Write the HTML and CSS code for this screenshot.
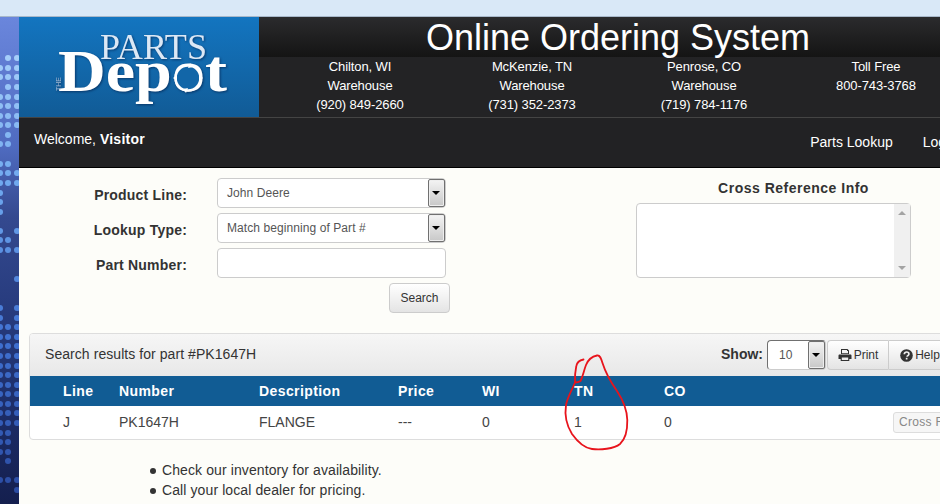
FILE: index.html
```html
<!DOCTYPE html>
<html lang="en">
<head>
<meta charset="utf-8">
<title>Parts Depot - Online Ordering System</title>
<link rel="stylesheet" href="styles.css">
</head>
<body>
<div class="topstrip"></div>
<div class="page">
  <aside class="sidebar">
    <svg class="dots" width="19" height="487" viewBox="0 17 19 487">
      <defs>
        <linearGradient id="dotfill" gradientUnits="userSpaceOnUse" x1="0" y1="50" x2="0" y2="500">
          <stop offset="0" stop-color="#a8d0fa"/>
          <stop offset="0.3" stop-color="#6fa8ee"/>
          <stop offset="0.65" stop-color="#3f70d0"/>
          <stop offset="1" stop-color="#2a4aa0"/>
        </linearGradient>
      </defs>
      <path class="dotpath" stroke="url(#dotfill)" d="M8 58h.01M17 58h.01M0 68h.01M8 68h.01M17 68h.01M0 77h.01M8 77h.01M17 77h.01M8 87h.01M17 87h.01M0 97h.01M8 97h.01M17 97h.01M0 106h.01M8 106h.01M17 106h.01M0 116h.01M8 116h.01M17 116h.01M0 125h.01M8 125h.01M17 125h.01M8 135h.01M0 144h.01M8 144h.01M0 164h.01M8 164h.01M0 173h.01M8 173h.01M17 173h.01M0 183h.01M8 183h.01M17 183h.01M0 193h.01M0 202h.01M0 212h.01M0 231h.01M17 231h.01M0 240h.01M8 240h.01M0 250h.01M8 250h.01M17 250h.01M17 279h.01M0 308h.01M17 308h.01M0 318h.01M17 318h.01M0 327h.01M8 327h.01M17 327h.01M0 337h.01M8 337h.01M17 337h.01M0 346h.01M8 346h.01M17 346h.01M0 356h.01M8 356h.01M17 356h.01M0 366h.01M8 366h.01M17 366h.01M0 375h.01M8 375h.01M17 375h.01M0 385h.01M8 385h.01M17 385h.01M0 394h.01M8 394h.01M17 394h.01M0 404h.01M8 404h.01M17 404h.01M0 413h.01M8 413h.01M17 413h.01M0 423h.01M8 423h.01M17 423h.01M0 433h.01M8 433h.01M0 442h.01M8 442h.01M0 452h.01M8 452h.01M8 461h.01M0 480h.01M8 480h.01M17 480h.01M17 490h.01"/>
    </svg>
  </aside>
  <div class="wrap">
    <header class="header">
      <div class="logo">
        <svg width="240" height="100" viewBox="0 0 240 100" role="img" aria-label="The Parts Depot">
          <text class="logo-parts" x="81" y="42" textLength="107" lengthAdjust="spacingAndGlyphs">PARTS</text>
          <text class="logo-depot" x="39" y="74" textLength="169" lengthAdjust="spacingAndGlyphs">Depot</text>
          <text class="logo-the" transform="translate(42 74) rotate(-90)">THE</text>
          <circle class="logo-ring" cx="169" cy="61" r="12.500"/>
          <path class="logo-notch" d="M154 61l4-3v6zM171 46l3 4-5 1zM184 61l-4 3v-6zM167 76l-3-4 5-1z"/>
        </svg>
      </div>
      <div class="head-right">
        <h1 class="title">Online Ordering System</h1>
        <div class="contacts">
          <p class="contact">Chilton, WI<br>Warehouse<br>(920) 849-2660</p>
          <p class="contact">McKenzie, TN<br>Warehouse<br>(731) 352-2373</p>
          <p class="contact">Penrose, CO<br>Warehouse<br>(719) 784-1176</p>
          <p class="contact">Toll Free<br>800-743-3768</p>
        </div>
      </div>
    </header>
    <nav class="nav">
      <div class="welcome">Welcome, <strong>Visitor</strong></div>
      <div class="navlinks"><a>Parts Lookup</a><a>Login</a></div>
    </nav>
    <main class="main">
      <section class="lookup">
        <form class="form">
          <label class="flabel">Product Line:</label>
          <div class="select"><span>John Deere</span><i class="arrowbtn"><b></b></i></div>
          <label class="flabel">Lookup Type:</label>
          <div class="select"><span>Match beginning of Part #</span><i class="arrowbtn"><b></b></i></div>
          <label class="flabel">Part Number:</label>
          <div class="input"></div>
          <div class="search-cell"><button class="btn search" type="button">Search</button></div>
        </form>
        <div class="xref">
          <h2 class="xref-title">Cross Reference Info</h2>
          <div class="xref-box">
            <div class="xref-scroll"><b class="sc-up"></b><b class="sc-down"></b></div>
          </div>
        </div>
      </section>
      <section class="panel">
        <div class="panel-head">
          <div class="panel-title">Search results for part #PK1647H</div>
          <span class="show-label">Show:</span>
          <div class="select show"><span>10</span><i class="arrowbtn"><b></b></i></div>
          <div class="btngroup">
            <button class="btn gbtn" type="button">
              <svg class="ico" width="14" height="14" viewBox="0 0 14 14"><path d="M3 1h6.500L11 2.500V6H3zM4 2v3.200h6V3H9V2z" fill-rule="evenodd"/><path d="M1.500 6.500h11c.5 0 1 .5 1 1V11h-2.200v2H2.700v-2H.5V7.500c0-.5.5-1 1-1zM3.800 9.500V12h6.400V9.500z" fill-rule="evenodd"/></svg>Print</button>
            <button class="btn gbtn" type="button">
              <svg class="ico" width="13" height="13" viewBox="0 0 13 13"><circle cx="6.500" cy="6.500" r="6.300"/><path class="q" d="M4.300 5.200c0-1.400 1-2.200 2.300-2.200s2.300.8 2.300 2c0 1.600-1.800 1.500-1.800 2.700"/><rect class="qd" x="5.800" y="8.800" width="1.700" height="1.700"/></svg>Help</button>
          </div>
        </div>
        <table class="results">
          <colgroup><col class="c1"><col class="c2"><col class="c3"><col class="c4"><col class="c5"><col class="c6"><col class="c7"><col></colgroup>
          <thead>
            <tr><th>Line</th><th>Number</th><th>Description</th><th>Price</th><th>WI</th><th>TN</th><th>CO</th><th></th></tr>
          </thead>
          <tbody>
            <tr><td>J</td><td>PK1647H</td><td>FLANGE</td><td>---</td><td>0</td><td>1</td><td>0</td><td class="xcell"><span class="xbtn">Cross Ref</span></td></tr>
          </tbody>
        </table>
      </section>
      <ul class="notes">
        <li>Check our inventory for availability.</li>
        <li>Call your local dealer for pricing.</li>
      </ul>
    </main>
  </div>
</div>
<svg class="scribble" width="940" height="504" viewBox="0 0 940 504" aria-hidden="true">
  <path d="M583.500 359.500C579 360.500 577 362 576.300 366C575 372 574.800 377 575 382.500C577 382.500 579 382 580.500 381C583 376 584 370 586 365C588 360 592 356.500 597 355.500C600 355 601 358 602.500 363C605 371 610 381 617 391C623 400 627 410 627.300 420C627.500 430 625.500 439 620 444C614 449 600 450 592 449C584 448 577 441 572 434C567 426 564.500 415 566 405C567.500 397 572 390 575 382.500"/>
</svg>
</body>
</html>
```
FILE: styles.css
```css
* { box-sizing: border-box; }
html, body { margin: 0; height: 504px; overflow: hidden; }
body {
  width: 940px;
  position: relative;
  background: #fdfdf9;
  font-family: "Liberation Sans", Arial, sans-serif;
  font-size: 14px;
  color: #333;
}
.topstrip { height: 17px; background: #d9e8f7; border-bottom: 1px solid #a8b8ca; }
.page { display: flex; height: 487px; width: 977px; }
.sidebar {
  flex: 0 0 19px;
  overflow: hidden;
  background: linear-gradient(#6a86dc 0, #4f6bc0 130px, #34498f 200px, #263a7c 300px, #1c2c66 400px, #141f4e 487px);
}
.dots { display: block; }
.dotpath { fill: none; stroke-width: 6; stroke-linecap: round; }
.wrap { flex: 0 0 958px; display: flex; flex-direction: column; }

.header { display: flex; height: 100px; background: #232325; color: #fff; }
.logo { flex: 0 0 240px; background: linear-gradient(#1375c0, #115b96); }
.logo svg { display: block; filter: drop-shadow(1px 1px 1px rgba(0, 20, 60, .55)); }
.logo-parts { font: 400 35px "Liberation Serif", serif; fill: #dce8f5; }
.logo-depot { font: 700 60px "Liberation Serif", serif; fill: #fff; }
.logo-the { font: 400 7px "Liberation Sans", sans-serif; fill: #9fb8d4; }
.logo-ring { fill: #1266a8; stroke: #fff; stroke-width: 2.500; }
.logo-notch { fill: #fff; }
.head-right { flex: 1; display: flex; flex-direction: column; }
.title {
  height: 40px;
  margin: 0;
  background: linear-gradient(#2b2b2d, #141414);
  font-size: 36px;
  font-weight: 400;
  line-height: 42px;
  text-align: center;
}
.contacts { display: flex; padding: 0 15px; }
.contact {
  flex: 0 0 172px;
  margin: 0;
  font-size: 13px;
  letter-spacing: -.1px;
  line-height: 19px;
  text-align: center;
}

.nav {
  height: 51px;
  display: flex;
  justify-content: space-between;
  padding: 0 20px 0 15px;
  background: #222224;
  border-top: 1px solid #444;
  border-bottom: 1px solid #000;
  color: #fff;
}
.welcome { padding-top: 13px; line-height: 16px; }
.welcome strong { letter-spacing: .25px; }
.navlinks { display: flex; gap: 30px; padding-top: 15px; line-height: 18px; }

.main { flex: 1; padding: 10px 10px 0; background: #fdfdf9; }
.lookup { display: flex; height: 135px; }
.form {
  display: grid;
  grid-template-columns: 158px 229px;
  grid-auto-rows: 30px;
  column-gap: 30px;
  row-gap: 5px;
  align-items: center;
}
.flabel { padding-top: 4px; text-align: right; font-weight: 700; letter-spacing: .2px; color: #333; }
.select, .input {
  height: 30px;
  background: #fff;
  border: 1px solid #ccc;
  border-radius: 4px;
  position: relative;
  font-size: 12px;
  letter-spacing: .08px;
  color: #555;
  line-height: 28px;
  padding-left: 9px;
}
.arrowbtn {
  position: absolute;
  top: 0;
  right: 0;
  width: 17px;
  height: 28px;
  border: 1px solid #707070;
  border-radius: 2px;
  background: linear-gradient(#f4f4f4, #c8c8c8);
  box-shadow: inset 0 0 0 1px #eee;
}
.arrowbtn b {
  position: absolute;
  left: 3px;
  top: 11px;
  border: 4px solid transparent;
  border-top: 4px solid #000;
  border-bottom: 0;
}
.search-cell { grid-column: 2; display: flex; justify-content: flex-end; margin-right: -4px; }
.btn {
  height: 30px;
  padding: 0;
  font: 12px "Liberation Sans", sans-serif;
  color: #333;
  background: linear-gradient(#fff, #e4e4e4);
  border: 1px solid #ccc;
  border-radius: 4px;
}
.search { width: 61px; }
.xref { width: 275px; margin-left: 190px; }
.xref-title {
  margin: 0;
  height: 25px;
  padding-left: 40px;
  font-size: 14px;
  font-weight: 700;
  letter-spacing: .5px;
  line-height: 20px;
  text-align: center;
  color: #333;
}
.xref-box {
  height: 75px;
  display: flex;
  justify-content: flex-end;
  background: #fff;
  border: 1px solid #ccc;
  border-radius: 4px;
}
.xref-scroll {
  width: 16px;
  display: flex;
  flex-direction: column;
  justify-content: space-between;
  align-items: center;
  padding: 7px 0;
  background: #f0f0f0;
}
.sc-up, .sc-down { border: 4px solid transparent; }
.sc-up { border-bottom: 4px solid #a3a3a3; border-top: 0; }
.sc-down { border-top: 4px solid #a3a3a3; border-bottom: 0; }

.panel {
  margin-top: 20px;
  height: 107px;
  background: #fff;
  border: 1px solid #ddd;
  border-radius: 4px;
}
.panel-head {
  height: 42px;
  display: flex;
  align-items: center;
  padding: 0 14px 0 15px;
  background: linear-gradient(#f6f6f6, #e8e8e8);
  border-radius: 3px 3px 0 0;
}
.panel-title { flex: 1; padding-bottom: 2px; letter-spacing: .06px; }
.show-label { font-size: 14px; font-weight: 700; margin-right: 4px; padding-bottom: 2px; }
.select.show {
  width: 59px;
  border-color: #707070 #ccc #ccc #707070;
  border-width: 1px;
  font-size: 12px;
  padding-left: 11px;
  margin-right: 1px;
}
.show span { line-height: 28px; }
.btngroup { display: flex; }
.gbtn { display: flex; align-items: center; justify-content: center; gap: 2px; }
.gbtn:first-child { width: 61px; border-radius: 4px 0 0 4px; border-right: 0; }
.gbtn:last-child { width: 64px; border-radius: 0 4px 4px 0; }
.ico { fill: #333; }
.q { fill: none; stroke: #f0f0f0; stroke-width: 1.700; }
.qd { fill: #f0f0f0; }

.results { width: 100%; border-collapse: collapse; table-layout: fixed; }
.c1 { width: 89px; }
.c2 { width: 140px; }
.c3 { width: 139px; }
.c4 { width: 84px; }
.c5 { width: 92px; }
.c6 { width: 90px; }
.c7 { width: 229px; }
.results th, .results td { padding: 0; text-align: left; }
.results th:first-child, .results td:first-child { padding-left: 33px; }
.results th {
  height: 30px;
  background: #115c94;
  color: #fff;
  font-weight: 700;
  letter-spacing: .4px;
}
.results td { height: 33px; padding-bottom: 1px; color: #444; }
.results .xcell { padding: 0; }
.xbtn {
  display: inline-block;
  vertical-align: middle;
  width: 70px;
  height: 21px;
  padding-left: 5px;
  font-size: 12px;
  line-height: 19px;
  color: #888;
  letter-spacing: .3px;
  background: #f6f6f6;
  border: 1px solid #ddd;
  border-radius: 3px;
  white-space: nowrap;
  overflow: hidden;
}
.notes {
  margin: 20px 0 0;
  padding-left: 133px;
  list-style: none;
  line-height: 20px;
  letter-spacing: .1px;
}
.notes li { position: relative; }
.notes li::before {
  content: "";
  position: absolute;
  left: -12px;
  top: 8px;
  width: 6px;
  height: 6px;
  border-radius: 50%;
  background: #333;
}

.scribble { position: absolute; left: 0; top: 0; pointer-events: none; }
.scribble path { fill: none; stroke: #e8141c; stroke-width: 1.800; stroke-linecap: round; stroke-linejoin: round; }
```
